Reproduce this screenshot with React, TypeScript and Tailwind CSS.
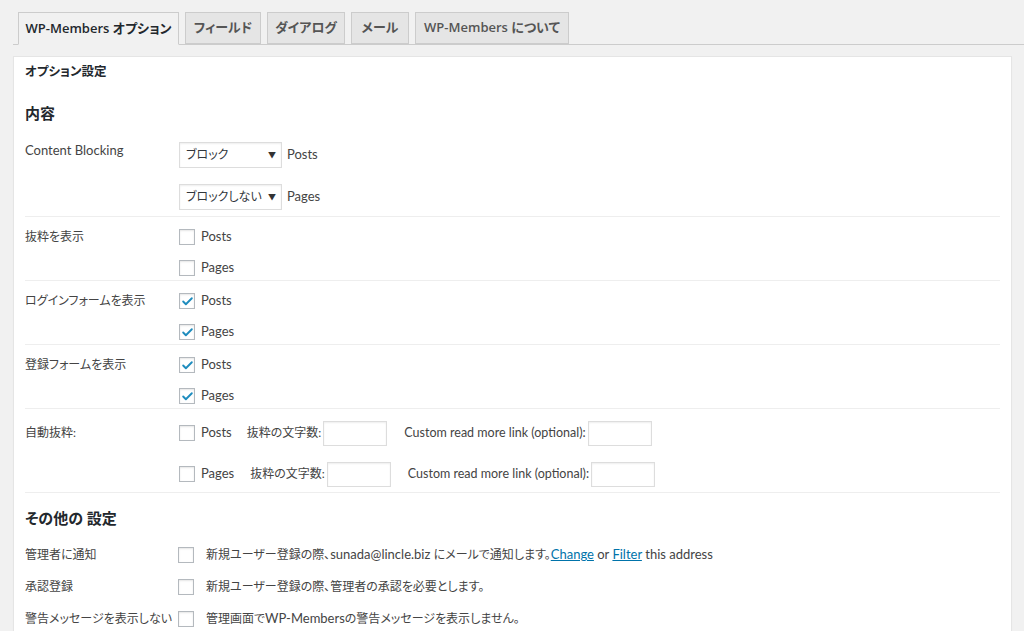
import { Check } from "lucide-react";

const tabs = [
  { label: "WP-Members オプション", w: "w-[161px]" },
  { label: "フィールド", w: "w-[76px]" },
  { label: "ダイアログ", w: "w-[78px]" },
  { label: "メール", w: "w-[58px]" },
  { label: "WP-Members について", w: "w-[154px]" },
];

// Japanese runs are set a touch smaller, like the narrow UI font in the shot
function J({ children }: { children: React.ReactNode }) {
  return <span className="text-[12px]">{children}</span>;
}

function Box({ checked = false }: { checked?: boolean }) {
  return (
    <span className="inline-flex h-[16px] w-[16px] shrink-0 items-center justify-center border border-[#b4b9be] bg-white shadow-[inset_0_1px_2px_rgba(0,0,0,0.1)]">
      {checked && <Check className="h-[13px] w-[13px] text-[#1e8cbe]" strokeWidth={3.5} />}
    </span>
  );
}

function CheckItem({ label, checked }: { label: string; checked?: boolean }) {
  return (
    <div className="flex h-[20px] items-center gap-[6px]">
      <Box checked={checked} />
      <span>{label}</span>
    </div>
  );
}

function Select({ value, after }: { value: string; after: string }) {
  return (
    <div className="flex items-center gap-[5px]">
      <div className="flex h-[26px] w-[103px] items-center justify-between whitespace-nowrap border border-[#ddd] bg-white pl-[6px] pr-[5px] shadow-[inset_0_1px_2px_rgba(0,0,0,0.07)]">
        <span className="text-[12px] text-[#32373c]">{value}</span>
        <span className="text-[8px] text-[#333]">▼</span>
      </div>
      <span>{after}</span>
    </div>
  );
}

function TextBox() {
  return <span className="inline-block h-[25px] w-[64px] border border-[#ddd] bg-white shadow-[inset_0_1px_2px_rgba(0,0,0,0.07)]" />;
}

function CheckRow({ label, posts, pages }: { label: string; posts?: boolean; pages?: boolean }) {
  return (
    <div className="flex border-b border-[#eee] pb-[2px] pt-[10px]">
      <div className="flex h-[20px] w-[154px] items-center whitespace-nowrap text-[12px]">{label}</div>
      <div className="flex flex-col gap-[11px]">
        <CheckItem label="Posts" checked={posts} />
        <CheckItem label="Pages" checked={pages} />
      </div>
    </div>
  );
}

function ExcerptLine({ label, gap }: { label: string; gap: string }) {
  return (
    <div className="flex h-[26px] items-center whitespace-nowrap">
      <Box />
      <span className="ml-[6px]">{label}</span>
      <span className={gap + " text-[12px]"}>抜粋の文字数:</span>
      <span className="ml-[2px] flex"><TextBox /></span>
      <span className="ml-[17px] text-[12.5px]">Custom read more link (optional):</span>
      <span className="ml-[2px] flex"><TextBox /></span>
    </div>
  );
}

function OtherRow({ label, children }: { label: string; children: React.ReactNode }) {
  return (
    <div className="flex h-[32px] items-center whitespace-nowrap">
      <div className="w-[153px] shrink-0 text-[12px]">{label}</div>
      <Box />
      <div className="ml-[12px]">{children}</div>
    </div>
  );
}

export default function App() {
  return (
    <div
      className="h-[631px] w-[1024px] overflow-hidden bg-[#f1f1f1] text-[13px] text-[#444] [font-feature-settings:'palt']"
      style={{ fontFamily: 'Lato, "Noto Sans CJK JP", sans-serif' }}
    >
      <div className="ml-[13px] flex gap-[6px] border-b border-[#ccc] pl-[5px] pt-[12px]">
        {tabs.map((t, i) => (
          <div
            key={t.label}
            className={
              (i === 0
                ? "-mb-px h-[33px] border-b-[#f1f1f1] bg-[#f1f1f1] text-[#23282d] "
                : "h-[32px] bg-[#e5e5e5] text-[#555] ") +
              t.w +
              " flex items-center justify-center whitespace-nowrap border border-[#ccc] font-['Open_Sans','Noto_Sans_CJK_JP',sans-serif] text-[13px] font-semibold"
            }
          >
            {t.label}
          </div>
        ))}
      </div>

      <div className="ml-[13px] mt-[11px] h-[600px] w-[999px] border border-[#e5e5e5] bg-white px-[11px] pt-[5px] shadow-[0_1px_1px_rgba(0,0,0,0.04)]">
        <h2 className="text-[12.5px] font-semibold leading-[20px] text-[#23282d]">オプション設定</h2>
        <h3 className="mt-[20px] text-[15px] font-semibold leading-[22px] text-[#23282d]">内容</h3>

        <div className="mt-[10px] flex border-b border-[#eee] pb-[6px] pt-[8px]">
          <div className="w-[154px] leading-[16px]">Content Blocking</div>
          <div className="flex flex-col gap-[16px]">
            <Select value="ブロック" after="Posts" />
            <Select value="ブロックしない" after="Pages" />
          </div>
        </div>

        <CheckRow label="抜粋を表示" />
        <CheckRow label="ログインフォームを表示" posts pages />
        <CheckRow label="登録フォームを表示" posts pages />

        <div className="flex border-b border-[#eee] pb-[5px] pt-[11px]">
          <div className="flex h-[26px] w-[154px] items-center text-[12px]">自動抜粋:</div>
          <div className="flex flex-col gap-[15px]">
            <ExcerptLine label="Posts" gap="ml-[15px]" />
            <ExcerptLine label="Pages" gap="ml-[16px]" />
          </div>
        </div>

        <h3 className="mt-[14px] text-[15px] font-semibold leading-[22px] text-[#23282d]">その他の 設定</h3>

        <div className="mt-[10px] flex flex-col">
          <OtherRow label="管理者に通知">
            <J>新規ユーザー登録の際、</J>sunada@lincle.biz <J>にメールで通知します。</J>
            <a className="text-[#0073aa] underline">Change</a> or{" "}
            <a className="text-[#0073aa] underline">Filter</a> this address
          </OtherRow>
          <OtherRow label="承認登録">
            <J>新規ユーザー登録の際、管理者の承認を必要とします。</J>
          </OtherRow>
          <OtherRow label="警告メッセージを表示しない">
            <J>管理画面で</J>WP-Members<J>の警告メッセージを表示しません。</J>
          </OtherRow>
        </div>
      </div>
    </div>
  );
}
